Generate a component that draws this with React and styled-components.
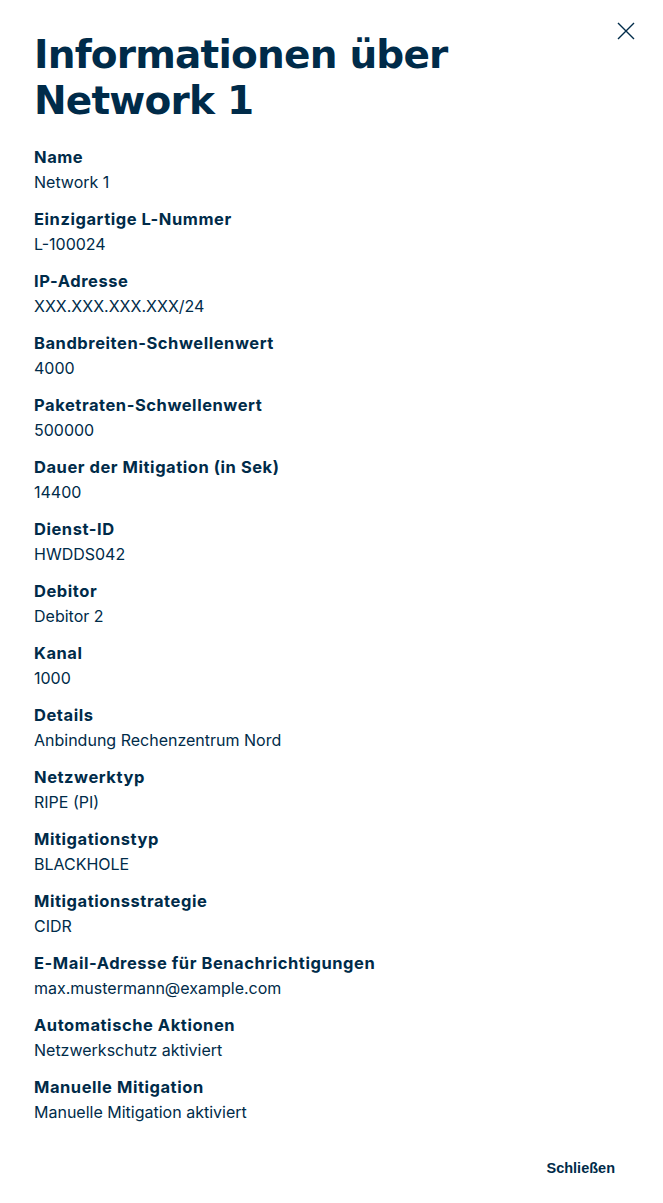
import React from "react";
import styled, { createGlobalStyle } from "styled-components";

const Global = createGlobalStyle`
  html, body { margin: 0; padding: 0; background: #fff; }
  body { font-family: Inter, "Noto Sans", sans-serif; color: #002b49; }
`;

const Panel = styled.div`
  position: relative;
  width: 663px;
  min-height: 1203px;
  box-sizing: border-box;
  padding: 32px 48px 0 34px;
  display: flex;
  flex-direction: column;
`;

const CloseButton = styled.button`
  position: absolute;
  top: 22px;
  right: 28px;
  width: 18px;
  height: 18px;
  padding: 0;
  border: 0;
  background: none;
  cursor: pointer;
  display: flex;
  align-items: center;
  justify-content: center;
`;

const Title = styled.h1`
  margin: 0 0 21px;
  font-family: "DejaVu Sans", sans-serif;
  font-weight: 700;
  font-size: 39px;
  line-height: 46px;
  letter-spacing: -0.8px;
  color: #002b49;
`;

const List = styled.dl`
  margin: 0;
  display: flex;
  flex-direction: column;
  gap: 13px;
`;

const Item = styled.div`
  display: flex;
  flex-direction: column;
`;

const Label = styled.dt`
  font-size: 16.5px;
  font-weight: 700;
  line-height: 25px;
  letter-spacing: 0.55px;
  color: #002b49;
`;

const Value = styled.dd`
  margin: 0;
  font-size: 16px;
  font-weight: 400;
  line-height: 24px;
  color: #002b49;
`;

const Footer = styled.div`
  display: flex;
  justify-content: flex-end;
  padding-top: 32px;
`;

const TextButton = styled.button`
  border: 0;
  background: none;
  padding: 4px 0;
  font-family: "Liberation Sans", Arial, sans-serif;
  font-weight: 700;
  font-size: 14.5px;
  color: #002b49;
  cursor: pointer;
`;

const items = [
  ["Name", "Network 1"],
  ["Einzigartige L-Nummer", "L-100024"],
  ["IP-Adresse", "XXX.XXX.XXX.XXX/24"],
  ["Bandbreiten-Schwellenwert", "4000"],
  ["Paketraten-Schwellenwert", "500000"],
  ["Dauer der Mitigation (in Sek)", "14400"],
  ["Dienst-ID", "HWDDS042"],
  ["Debitor", "Debitor 2"],
  ["Kanal", "1000"],
  ["Details", "Anbindung Rechenzentrum Nord"],
  ["Netzwerktyp", "RIPE (PI)"],
  ["Mitigationstyp", "BLACKHOLE"],
  ["Mitigationsstrategie", "CIDR"],
  ["E-Mail-Adresse für Benachrichtigungen", "max.mustermann@example.com"],
  ["Automatische Aktionen", "Netzwerkschutz aktiviert"],
  ["Manuelle Mitigation", "Manuelle Mitigation aktiviert"],
];

export default function App() {
  return (
    <>
      <Global />
      <Panel>
        <CloseButton aria-label="Schließen">
          <svg width="18" height="18" viewBox="0 0 18 18">
            <path d="M1 1L17 17M17 1L1 17" stroke="#002b49" strokeWidth="1.4" />
          </svg>
        </CloseButton>
        <Title>
          Informationen über
          <br />
          Network 1
        </Title>
        <List>
          {items.map(([l, v]) => (
            <Item key={l}>
              <Label>{l}</Label>
              <Value>{v}</Value>
            </Item>
          ))}
        </List>
        <Footer>
          <TextButton>Schließen</TextButton>
        </Footer>
      </Panel>
    </>
  );
}
